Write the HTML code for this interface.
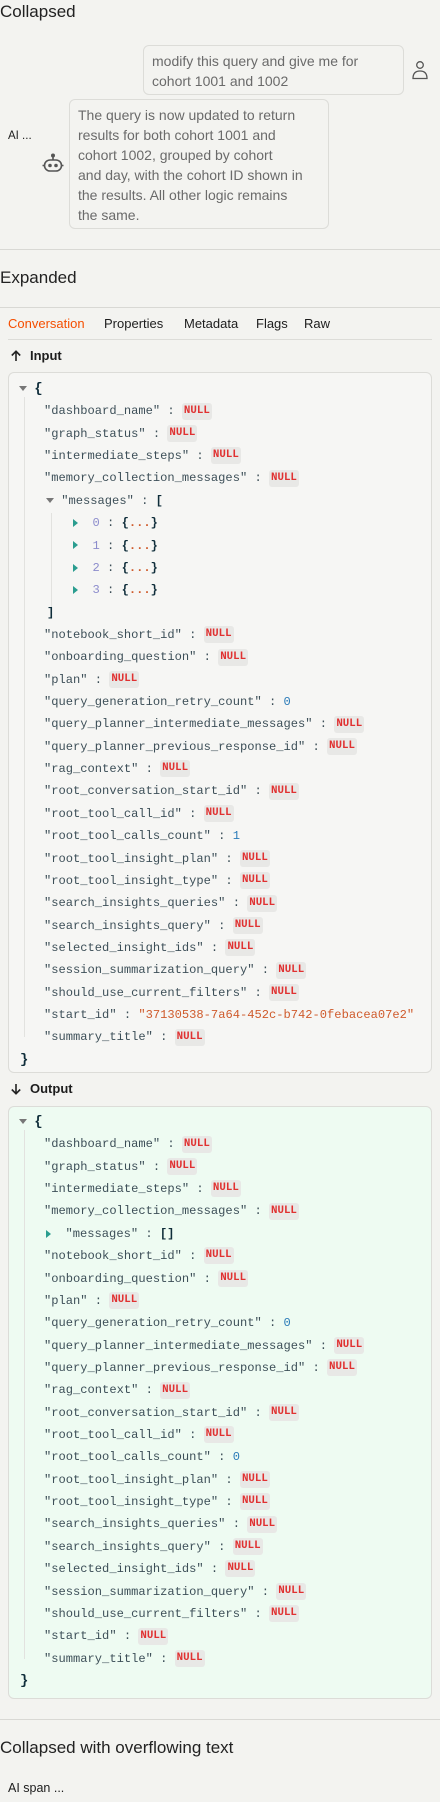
<!DOCTYPE html>
<html><head><meta charset="utf-8"><style>
*{box-sizing:border-box;margin:0;padding:0}
body{width:440px;height:1802px;background:#f3f3f0;font-family:"Liberation Sans",sans-serif;color:#1d1d1d;position:relative;overflow:hidden}
.abs{position:absolute}
h2{position:absolute;left:0;font-size:17px;font-weight:normal;color:#222}
.hr{position:absolute;left:0;width:440px;height:1px;background:#d8d8d4}
.bubble{position:absolute;border:1px solid #dcdcd8;border-radius:6px;background:#f3f3f0;color:#6a6a6a;font-size:14px;line-height:20px;padding:5px 8px;white-space:nowrap}
.tabs{position:absolute;top:316px;left:8px;font-size:13px}
.tabs span{position:absolute;white-space:nowrap}
.card{position:absolute;left:8px;width:424px;border:1px solid #dcdcd8;border-radius:6px}
.json{position:absolute;left:0;top:0;font-family:"Liberation Mono",monospace;font-size:12.1px;color:#3d4f58}
.r{position:absolute;white-space:nowrap;height:18px;line-height:18px}
.n{display:inline-block;background:#e8e8e6;color:#e03131;font-weight:bold;font-family:"Liberation Mono",monospace;font-size:10.8px;line-height:17px;padding:0 2px;border-radius:3px;vertical-align:middle}
.b{color:#0f2d3a;font-weight:bold}
.num{color:#2a7bb8}
.str{color:#cf5b2c}
.idx{color:#8c8ccc}
.tri{display:inline-block;width:0;height:0;border-left:4px solid transparent;border-right:4px solid transparent;border-top:5px solid #777;vertical-align:middle}
.trir{display:inline-block;width:0;height:0;border-top:4px solid transparent;border-bottom:4px solid transparent;border-left:5px solid #2a9d8f;vertical-align:middle}
.vl{position:absolute;width:1px;background:#e2e2df}
.head{position:absolute;left:10px;font-size:13px;font-weight:bold}
</style></head><body>
<h2 style="top:2px">Collapsed</h2>
<div class="bubble" style="left:143px;top:45px;width:261px;height:50px">modify this query and give me for<br>cohort 1001 and 1002</div>
<svg class="abs" style="left:411px;top:60px" width="18" height="20" viewBox="0 0 18 20" fill="none" stroke="#555" stroke-width="1.3"><circle cx="9" cy="5" r="3.3"/><path d="M2 18.5 C2 13 5 11 9 11 C13 11 16 13 16 18.5 Z"/></svg>
<div class="abs" style="left:8px;top:130px;font-size:11.5px">AI ...</div>
<svg class="abs" style="left:41px;top:153px" width="24" height="22" viewBox="0 0 24 22" fill="none" stroke="#555" stroke-width="1.6"><circle cx="12" cy="2.5" r="1.2" fill="#555"/><path d="M12 4v3"/><rect x="3.5" y="7" width="17" height="11" rx="5.5"/><path d="M1.5 12.5h2M20.5 12.5h2"/><circle cx="9" cy="12.5" r="1" fill="#555"/><circle cx="15" cy="12.5" r="1" fill="#555"/></svg>
<div class="bubble" style="left:69px;top:99px;width:260px;height:130px">The query is now updated to return<br>results for both cohort 1001 and<br>cohort 1002, grouped by cohort<br>and day, with the cohort ID shown in<br>the results. All other logic remains<br>the same.</div>
<div class="hr" style="top:249px"></div>
<h2 style="top:268px">Expanded</h2>
<div class="hr" style="top:307px"></div>
<div class="tabs"><span style="left:0;color:#f54e00">Conversation</span><span style="left:96px">Properties</span><span style="left:176px">Metadata</span><span style="left:248px">Flags</span><span style="left:296px">Raw</span></div>
<div class="abs" style="left:8px;top:339px;width:424px;height:1px;background:#dcdcd8"></div>
<svg class="abs" style="left:10px;top:350px" width="12" height="12" viewBox="0 0 12 12" fill="none" stroke="#222" stroke-width="1.6"><path d="M6 11V1.5M1.8 5.5L6 1.3l4.2 4.2"/></svg>
<div class="head" style="left:30px;top:348px">Input</div>
<div class="card" style="top:372px;height:701px;background:#f6f6f4"></div>
<svg class="abs" style="left:10px;top:1083px" width="12" height="12" viewBox="0 0 12 12" fill="none" stroke="#222" stroke-width="1.6"><path d="M6 1v9.5M1.8 6.5L6 10.7l4.2-4.2"/></svg>
<div class="head" style="left:30px;top:1081px">Output</div>
<div class="card" style="top:1106px;height:593px;background:#eefbf2"></div>
<div class="hr" style="top:1719px"></div>
<h2 style="top:1738px">Collapsed with overflowing text</h2>
<div class="abs" style="left:8px;top:1781px;font-size:12.5px">AI span ...</div>
<div id="j"></div>
<script>
var NL='<span class="n">NULL</span>';
var keysA=["dashboard_name","graph_status","intermediate_steps","memory_collection_messages"];
var keysB=["notebook_short_id","onboarding_question","plan","query_generation_retry_count","query_planner_intermediate_messages","query_planner_previous_response_id","rag_context","root_conversation_start_id","root_tool_call_id","root_tool_calls_count","root_tool_insight_plan","root_tool_insight_type","search_insights_queries","search_insights_query","selected_insight_ids","session_summarization_query","should_use_current_filters","start_id","summary_title"];
function build(top,expanded,out){
 var h='',y=top,rh=22.36;
 function row(x,c){h+='<div class="r" style="left:'+x+'px;top:'+(y-9)+'px">'+c+'</div>';y+=rh;}
 var y0=y;
 row(19,'<span class="tri"></span> <span class="b" style="font-size:14px">{</span>');
 keysA.forEach(function(k){row(44,'"'+k+'" : '+NL);});
 if(expanded){
  row(46,'<span class="tri"></span>&nbsp;"messages" : <span class="b">[</span>');
  var ys=y;
  for(var i=0;i<4;i++)row(73,'<span class="trir"></span>&nbsp;&nbsp;<span class="idx">'+i+'</span> : <span class="b">{</span><span class="str" style="font-weight:bold">...</span><span class="b">}</span>');
  h+='<div class="vl" style="left:51px;top:'+(ys-10)+'px;height:'+(rh*4+14)+'px"></div>';
  row(47,'<span class="b">]</span>');
 } else row(46,'<span class="trir"></span>&nbsp;&nbsp;"messages" : <span class="b">[]</span>');
 keysB.forEach(function(k){
  var v=NL;
  if(k=="query_generation_retry_count")v='<span class="num">0</span>';
  if(k=="root_tool_calls_count")v='<span class="num">'+(out?0:1)+'</span>';
  if(k=="start_id"&&!out)v='<span class="str">"37130538-7a64-452c-b742-0febacea07e2"</span>';
  row(44,'"'+k+'" : '+v);
 });
 h+='<div class="vl" style="left:24px;top:'+(y0+8)+'px;height:'+(y-y0-rh-8)+'px"></div>';
 row(20,'<span class="b" style="font-size:14px">}</span>');
 return '<div class="json">'+h+'</div>';
}
document.getElementById('j').innerHTML=build(389,true,false)+build(1122,false,true);
</script>
</body></html>
